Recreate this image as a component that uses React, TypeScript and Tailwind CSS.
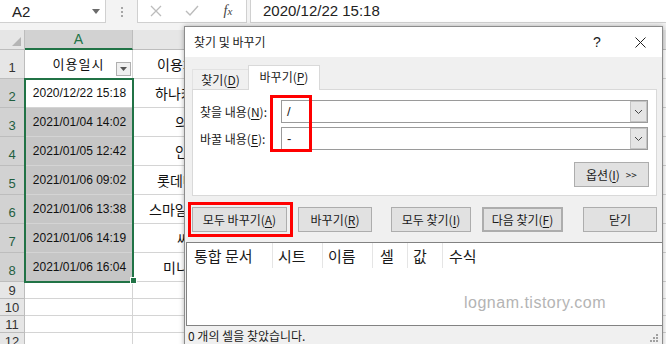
import React from 'react';

const gridRows = [
  { n: 1, a: '이용일시', b: '이용처', bPad: 'pl-[24px]', h: 'h-[29px]', sel: false, head: true },
  { n: 2, a: '2020/12/22 15:18', b: '하나카드', bPad: 'pl-[22px]', h: 'h-[29px]', sel: true, active: true },
  { n: 3, a: '2021/01/04 14:02', b: '의료원', bPad: 'pl-[42px]', h: 'h-[29px]', sel: true },
  { n: 4, a: '2021/01/05 12:42', b: '인터파크', bPad: 'pl-[42px]', h: 'h-[29px]', sel: true },
  { n: 5, a: '2021/01/06 09:02', b: '롯데마트', bPad: 'pl-[24px]', h: 'h-[29px]', sel: true },
  { n: 6, a: '2021/01/06 13:38', b: '스마일페이', bPad: 'pl-[16px]', h: 'h-[29px]', sel: true },
  { n: 7, a: '2021/01/06 14:19', b: '씨유', bPad: 'pl-[44px]', h: 'h-[29px]', sel: true },
  { n: 8, a: '2021/01/06 16:04', b: '미니스톱', bPad: 'pl-[30px]', h: 'h-[29px]', sel: true },
  { n: 9, a: '', b: '', bPad: '', h: 'h-[17px]', sel: false },
  { n: 10, a: '', b: '', bPad: '', h: 'h-[17px]', sel: false },
  { n: 11, a: '', b: '', bPad: '', h: 'h-[17px]', sel: false },
  { n: 12, a: '', b: '', bPad: '', h: 'h-[17px]', sel: false },
];

// 단축키 글자 밑줄
function Mn({ children }: { children: React.ReactNode }) {
  return <span className="underline underline-offset-[2px]">{children}</span>;
}

function FormulaBar() {
  return (
    <div className="flex h-[23px]">
      <div className="flex w-[106px] shrink-0 items-center justify-between border-r border-b border-[#d0d0d0] bg-white pl-[12px] pr-[5px]">
        <span className="text-[15px] leading-none">A2</span>
        <svg width="8" height="5" viewBox="0 0 8 5">
          <path d="M0 0h8L4 5z" fill="#6b6b6b" />
        </svg>
      </div>
      <div className="flex w-[31px] shrink-0 flex-col items-center justify-center gap-[2px]">
        <div className="h-[2px] w-[2px] bg-[#a6a6a6]" />
        <div className="h-[2px] w-[2px] bg-[#a6a6a6]" />
        <div className="h-[2px] w-[2px] bg-[#a6a6a6]" />
      </div>
      <div className="flex w-[110px] shrink-0 items-center border-x border-b border-[#d0d0d0] bg-white">
        <div className="flex w-[36px] justify-center">
          <svg width="12" height="12" viewBox="0 0 12 12">
            <path d="M1 1l10 10M11 1L1 11" stroke="#bcbcbc" strokeWidth="1.3" />
          </svg>
        </div>
        <div className="flex w-[36px] justify-center">
          <svg width="14" height="12" viewBox="0 0 14 12">
            <path d="M1 6l4 4 8-9" stroke="#bcbcbc" strokeWidth="1.4" fill="none" />
          </svg>
        </div>
        <div className="flex w-[36px] items-baseline justify-center font-['Liberation_Serif',serif] italic leading-none text-[#444]">
          <span className="text-[14px]">f</span>
          <span className="text-[11px]">x</span>
        </div>
      </div>
      <div className="ml-[3px] flex flex-1 items-center border-b border-l border-[#d0d0d0] bg-white pl-[12px] text-[15px]">
        2020/12/22 15:18
      </div>
    </div>
  );
}

function Sheet() {
  return (
    <div className="relative bg-white">
      <div className="flex h-[20px] bg-[#e6e6e6]">
        <div className="relative w-[25px] shrink-0 border-r border-b border-[#bdbdbd]">
          <svg className="absolute right-[3px] bottom-[3px]" width="9" height="9" viewBox="0 0 9 9">
            <path d="M9 0v9H0z" fill="#b5b5b5" />
          </svg>
        </div>
        <div className="flex w-[108px] shrink-0 items-center justify-center border-r border-b-2 border-r-[#bdbdbd] border-b-[#217346] bg-[#d2d2d2] text-[14px] text-[#217346]">
          A
        </div>
        <div className="flex w-[150px] shrink-0 items-center justify-center border-r border-b border-[#bdbdbd] text-[14px] text-[#444]">B</div>
        {['C', 'D', 'E', 'F'].map((c) => (
          <div key={c} className="flex w-[120px] shrink-0 items-center justify-center border-r border-b border-[#bdbdbd] text-[14px] text-[#444]">
            {c}
          </div>
        ))}
      </div>

      {gridRows.map((r) => (
        <div key={r.n} className={`flex ${r.h}`}>
          <div
            className={`flex w-[25px] shrink-0 items-end justify-center border-r border-b border-[#bdbdbd] pb-[1px] text-[13px] leading-none ${
              r.sel ? 'bg-[#d2d2d2] text-[#1f5e3f]' : 'bg-[#e6e6e6] text-[#333]'
            }`}
          >
            <span className={r.h === 'h-[29px]' ? 'pb-[3px]' : ''}>{r.n}</span>
          </div>
          <div
            className={`relative flex w-[108px] shrink-0 items-center justify-center border-r border-b border-[#d4d4d4] text-[12px] text-[#111] ${
              r.sel && !r.active ? 'bg-[#c6c6c6]' : 'bg-white'
            }`}
          >
            {r.head ? (
              <>
                <span className="font-['Noto_Sans_CJK_KR',sans-serif] text-[13px] tracking-[1px]">{r.a}</span>
                <div className="absolute right-[1px] bottom-[2px] flex h-[14px] w-[15px] items-center justify-center border border-[#b0b0b0] bg-[#f0f0f0]">
                  <svg width="7" height="4" viewBox="0 0 7 4">
                    <path d="M0 0h7L3.5 4z" fill="#555" />
                  </svg>
                </div>
              </>
            ) : (
              <span className="pl-[2px]">{r.a}</span>
            )}
          </div>
          <div
            className={`flex w-[150px] shrink-0 items-center overflow-hidden whitespace-nowrap border-r border-b border-[#d4d4d4] font-['Noto_Sans_CJK_KR',sans-serif] text-[14px] text-[#111] ${r.bPad}`}
          >
            {r.b}
          </div>
          {[0, 1, 2, 3].map((k) => (
            <div key={k} className="w-[120px] shrink-0 border-r border-b border-[#d4d4d4]" />
          ))}
        </div>
      ))}

      {/* 선택 영역 테두리 */}
      <div className="absolute left-[24px] top-[48px] h-[205px] w-[110px] border-2 border-[#217346]" />
      <div className="absolute left-[130px] top-[247px] h-[7px] w-[7px] border border-white bg-[#217346]" />
    </div>
  );
}

function Combo({ value }: { value: string }) {
  return (
    <div className="flex h-[23px] w-[367px] shrink-0 border border-[#9a9a9a] bg-white">
      <div className="flex flex-1 items-center pl-[5px] font-['Liberation_Sans',sans-serif] text-[13px]">{value}</div>
      <div className="flex w-[17px] items-center justify-center border border-[#c4c4c4] bg-[#e5e5e5]">
        <svg width="9" height="6" viewBox="0 0 9 6">
          <path d="M1 1l3.5 3.5L8 1" stroke="#444" strokeWidth="1" fill="none" />
        </svg>
      </div>
    </div>
  );
}

function Btn({ children, className = '' }: { children: React.ReactNode; className?: string }) {
  return (
    <div className={`flex h-[25px] shrink-0 items-center justify-center border border-[#adadad] bg-[#e1e1e1] ${className}`}>
      {children}
    </div>
  );
}

function FindReplaceDialog() {
  return (
    <div className="absolute left-[184px] top-[26px] flex w-[479px] flex-col border border-[#8c8c8c] bg-[#f0f0f0] font-['Noto_Sans_CJK_KR','Liberation_Sans',sans-serif] text-[12px] leading-none text-[#1a1a1a] shadow-[0_0_5px_rgba(0,0,0,0.3)]">
      <div className="flex h-[30px] items-center bg-white pl-[9px]">
        <span className="flex-1">찾기 및 바꾸기</span>
        <span className="w-[44px] text-center font-['Liberation_Sans',sans-serif] text-[14px]">?</span>
        <div className="mr-[1px] flex w-[42px] justify-center">
          <svg width="11" height="11" viewBox="0 0 11 11">
            <path d="M0.5 0.5l10 10M10.5 0.5l-10 10" stroke="#222" strokeWidth="1" />
          </svg>
        </div>
      </div>

      {/* 탭 */}
      <div className="flex h-[32px] items-end pl-[7px]">
        <div className="flex h-[20px] w-[56px] items-center justify-center border-t border-l border-[#e2e2e2]">
          찾기(<Mn>D</Mn>)
        </div>
        <div className="relative z-10 -mb-px flex h-[25px] w-[72px] items-center justify-center border border-b-0 border-[#d9d9d9] bg-white pb-[2px]">
          바꾸기(<Mn>P</Mn>)
        </div>
      </div>

      <div className="ml-[7px] flex h-[107px] w-[465px] flex-col border border-[#d9d9d9] bg-white px-[7px] pt-[10px]">
        <div className="flex items-center">
          <span className="w-[81px] shrink-0">
            찾을 내용(<Mn>N</Mn>):
          </span>
          <Combo value="/" />
        </div>
        <div className="mt-[4px] flex items-center">
          <span className="w-[81px] shrink-0">
            바꿀 내용(<Mn>E</Mn>):
          </span>
          <Combo value="-" />
        </div>
        <div className="mt-[12px] flex justify-end">
          <Btn className="h-[24px] w-[75px] gap-[6px]">
            <span>
              옵션(<Mn>I</Mn>)
            </span>
            <span className="text-[10px]">&gt;&gt;</span>
          </Btn>
        </div>
      </div>

      <div className="mt-[11px] flex pl-[7px]">
        <Btn className="w-[95px]">
          모두 바꾸기(<Mn>A</Mn>)
        </Btn>
        <Btn className="ml-[11px] w-[74px]">
          바꾸기(<Mn>R</Mn>)
        </Btn>
        <Btn className="ml-[19px] w-[80px]">
          모두 찾기(<Mn>I</Mn>)
        </Btn>
        <Btn className="ml-[11px] w-[81px] border-2 border-[#0078d7]">
          다음 찾기(<Mn>F</Mn>)
        </Btn>
        <Btn className="ml-[20px] w-[74px]">닫기</Btn>
      </div>

      {/* 결과 목록 */}
      <div className="relative mt-[10px] ml-[1px] h-[84px] border border-r-0 border-[#828282] bg-white">
        <div className="flex h-[25px] text-[15px]">
          <div className="flex w-[86px] items-center border-r border-[#e5e5e5] pl-[7px]">통합 문서</div>
          <div className="flex w-[50px] items-center border-r border-[#e5e5e5] pl-[5px]">시트</div>
          <div className="flex w-[50px] items-center border-r border-[#e5e5e5] pl-[5px]">이름</div>
          <div className="flex w-[35px] items-center border-r border-[#e5e5e5] pl-[7px]">셀</div>
          <div className="flex w-[35px] items-center border-r border-[#e5e5e5] pl-[5px]">값</div>
          <div className="flex flex-1 items-center pl-[6px]">수식</div>
        </div>
        <div className="absolute left-[277px] top-[52px] font-['Liberation_Sans',sans-serif] text-[16px] tracking-[0.5px] text-[#b4b4b4]">
          lognam.tistory.com
        </div>
      </div>

      <div className="relative flex h-[22px] items-start pl-[3px] pt-[4px]">
        <span>0 개의 셀을 찾았습니다.</span>
        <svg className="absolute right-[4px] top-[8px]" width="8" height="8" viewBox="0 0 8 8">
          <g fill="#a0a0a0">
            <rect x="6" y="0" width="2" height="2" />
            <rect x="3" y="3" width="2" height="2" />
            <rect x="6" y="3" width="2" height="2" />
            <rect x="0" y="6" width="2" height="2" />
            <rect x="3" y="6" width="2" height="2" />
            <rect x="6" y="6" width="2" height="2" />
          </g>
        </svg>
      </div>
    </div>
  );
}

export default function App() {
  return (
    <div className="relative h-[344px] w-[666px] overflow-hidden bg-[#f3f3f3] font-['Liberation_Sans','Noto_Sans_CJK_KR',sans-serif] text-[#222]">
      <FormulaBar />
      <div className="h-[7px]" />
      <Sheet />
      <FindReplaceDialog />
      {/* 빨간 강조 박스 */}
      <div className="absolute left-[270px] top-[95px] h-[57px] w-[42px] border-[3px] border-[#ff0000]" />
      <div className="absolute left-[188px] top-[202px] h-[35px] w-[105px] border-[3px] border-[#ff0000]" />
    </div>
  );
}
